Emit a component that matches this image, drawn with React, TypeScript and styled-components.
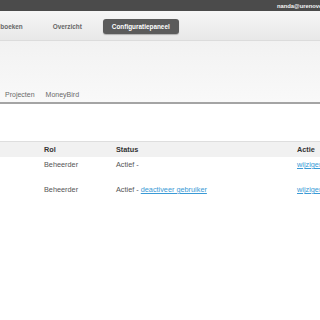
import React from "react";
import styled, { createGlobalStyle } from "styled-components";

const GlobalStyle = createGlobalStyle`
  html, body {
    margin: 0;
    padding: 0;
    background: #ffffff;
    overflow: hidden;
    font-family: "Liberation Sans", Arial, sans-serif;
  }
`;

const Page = styled.div`
  width: 320px;
  height: 320px;
  overflow: hidden;
  background: #fff;
`;

const TopBar = styled.div`
  height: 11px;
  background: #4b4b4b;
  display: flex;
  align-items: center;
  padding-left: 277px;
  white-space: nowrap;
`;

const UserName = styled.span`
  color: #f4f4f4;
  font-size: 5.8px;
  font-weight: bold;
`;

const MainNav = styled.nav`
  height: 29px;
  background: linear-gradient(#f6f6f6, #e8e8e8);
  border-bottom: 1px solid #dcdcdc;
  display: flex;
  align-items: center;
  gap: 21px;
  margin-left: -16px;
  white-space: nowrap;
`;

const NavItem = styled.span<{ $active?: boolean; $offset?: number }>`
  font-size: 6.4px;
  font-weight: bold;
  color: ${(p) => (p.$active ? "#ffffff" : "#666666")};
  background: ${(p) => (p.$active ? "#5b5b5b" : "transparent")};
  border-radius: 3px;
  padding: ${(p) => (p.$active ? "4px 9px" : "4px 0")};
  margin-top: 2px;
  margin-left: ${(p) => p.$offset ?? 0}px;
  box-shadow: ${(p) => (p.$active ? "0 1px 1px rgba(0,0,0,0.25)" : "none")};
`;

const SubHeader = styled.div`
  height: 61px;
  background: linear-gradient(#f2f2f2, #f9f9f9);
  border-bottom: 2px solid #a4a4a4;
  display: flex;
  align-items: flex-end;
  gap: 11px;
  padding-left: 5px;
`;

const SubTab = styled.span`
  font-size: 7px;
  color: #6a6a6a;
  padding-bottom: 4px;
`;

const Content = styled.div`
  padding-top: 37px;
`;

const Table = styled.table`
  width: 340px;
  border-collapse: collapse;
  table-layout: fixed;
  font-size: 7.3px;
  color: #555;
`;

const HeadCell = styled.th`
  text-align: left;
  font-weight: bold;
  color: #333;
  background: #f1f1f1;
  border-top: 1px solid #dedede;
  height: 15px;
  padding: 0 0 0 1px;
`;

const Row = styled.tr`
  height: 25px;
`;

const Cell = styled.td`
  padding: 3px 0 0 1px;
  vertical-align: top;
  white-space: nowrap;
`;

const Link = styled.a`
  color: #3a9ad6;
  text-decoration: underline;
`;

const rows = [
  { rol: "Beheerder", deactivate: false },
  { rol: "Beheerder", deactivate: true },
];

export default function App() {
  return (
    <Page>
      <GlobalStyle />
      <TopBar>
        <UserName>nanda@urenoverzicht.nl</UserName>
      </TopBar>
      <MainNav>
        <NavItem>Uren boeken</NavItem>
        <NavItem $offset={9}>Overzicht</NavItem>
        <NavItem $active>Configuratiepaneel</NavItem>
      </MainNav>
      <SubHeader>
        <SubTab>Projecten</SubTab>
        <SubTab>MoneyBird</SubTab>
      </SubHeader>
      <Content>
        <Table>
          <colgroup>
            <col style={{ width: 43 }} />
            <col style={{ width: 72 }} />
            <col style={{ width: 181 }} />
            <col />
          </colgroup>
          <thead>
            <tr>
              <HeadCell></HeadCell>
              <HeadCell>Rol</HeadCell>
              <HeadCell>Status</HeadCell>
              <HeadCell>Actie</HeadCell>
            </tr>
          </thead>
          <tbody>
            {rows.map((r, i) => (
              <Row key={i}>
                <Cell></Cell>
                <Cell>{r.rol}</Cell>
                <Cell>
                  Actief -{" "}
                  {r.deactivate && <Link href="#">deactiveer gebruiker</Link>}
                </Cell>
                <Cell>
                  <Link href="#">wijzigen</Link>
                </Cell>
              </Row>
            ))}
          </tbody>
        </Table>
      </Content>
    </Page>
  );
}
